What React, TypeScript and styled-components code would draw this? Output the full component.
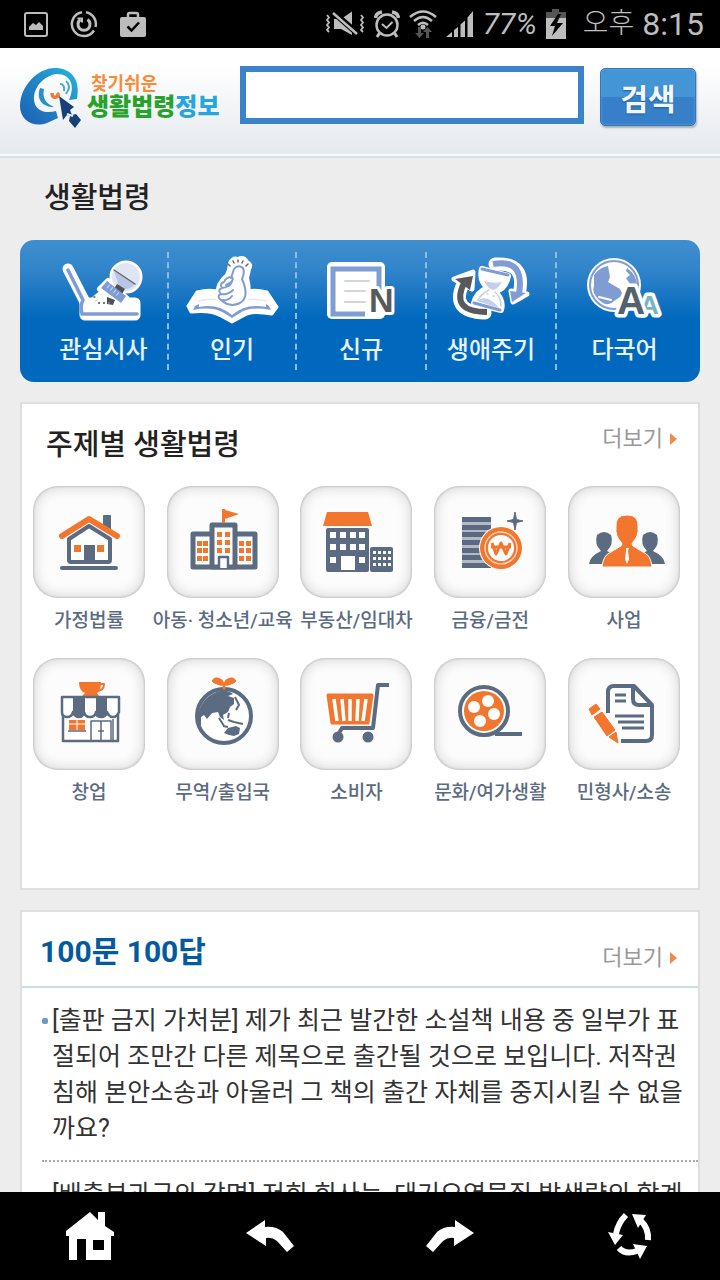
import React from 'react';
import styled, { createGlobalStyle } from 'styled-components';

const SLATE = '#5b6b82';
const ORANGE = '#f2762e';
const PERI = '#7f9dd3';

const GlobalStyle = createGlobalStyle`
  * { box-sizing: border-box; }
  body {
    margin: 0;
    background: #ededed;
    font-family: Roboto, "Noto Sans CJK KR", sans-serif;
    color: #222;
  }
  h1, h2, ul, p { margin: 0; padding: 0; }
  ul { list-style: none; }
  a { color: inherit; text-decoration: none; }
  svg { display: block; flex: none; }
`;

const Screen = styled.div`
  display: flex;
  flex-direction: column;
  height: 100vh;
`;

const StatusBar = styled.div`
  flex: none;
  display: flex;
  align-items: center;
  justify-content: space-between;
  height: 48px;
  padding: 0 16px 0 24px;
  background: #000;
  color: #bdbdbd;
`;

const StatusGroup = styled.div<{ $gap: number }>`
  display: flex;
  align-items: center;
  gap: ${p => p.$gap}px;
`;

const StatusText = styled.span<{ $slanted?: boolean }>`
  font-family: Roboto, "Noto Sans CJK KR", sans-serif;
  font-size: ${p => (p.$slanted ? 30 : 32)}px;
  line-height: 48px;
  font-weight: 400;
  font-style: ${p => (p.$slanted ? 'italic' : 'normal')};
  white-space: nowrap;
`;

const StatusClock = styled(StatusText)`
  display: flex;
  gap: 8px;
  margin-left: 8px;
`;

const Hangul = styled.span`
  font-size: 28px;
  font-weight: 300;
`;

const Page = styled.main`
  flex: 1;
  min-height: 0;
  overflow-y: auto;
  scrollbar-width: none;
`;

const Header = styled.header`
  display: flex;
  align-items: flex-start;
  height: 110px;
  padding: 18px 24px 0 20px;
  background: linear-gradient(#fff 15%, #e6eaee 95%);
  border-bottom: 2px solid #d3e1ee;
  box-shadow: inset 0 -2px #f6fafd;
`;

const Logo = styled.a`
  display: flex;
  gap: 5px;
  width: 220px;
  flex: none;
  padding-top: 2px;
`;

const LogoText = styled.span`
  display: flex;
  flex-direction: column;
  padding-top: 5px;
  font-weight: 900;
  white-space: nowrap;
`;

const LogoTop = styled.span`
  padding-left: 4px;
  font-size: 18px;
  line-height: 22px;
  font-weight: 700;
  color: #fb8a35;
`;

const LogoMain = styled.span<{ $color: string }>`
  font-size: 24px;
  line-height: 24px;
  color: ${p => p.$color};
`;

const SearchForm = styled.form`
  flex: 1;
  min-width: 0;
  display: flex;
  gap: 16px;
`;

const SearchInput = styled.input`
  flex: 1;
  min-width: 0;
  height: 58px;
  padding: 0 10px;
  border: 6px solid #3a82ca;
  border-radius: 0;
  background: #fff;
  font: inherit;
  font-size: 25px;
  outline: none;
`;

const SearchButton = styled.button`
  flex: none;
  width: 96px;
  height: 58px;
  margin-top: 2px;
  padding: 0;
  border: 1px solid #2f76bd;
  border-radius: 5px;
  background: linear-gradient(#4395d5 50%, #3780c9 50%);
  box-shadow: 1px 2px 2px #a9b1b9, inset 0 0 2px #6fb0e4;
  color: #f3f8fd;
  font-family: "Noto Sans CJK KR", sans-serif;
  font-size: 30px;
  font-weight: 700;
  line-height: 54px;
  text-shadow: 0 1px 2px #1d5c9f;
`;

const PageTitle = styled.h1`
  padding: 18px 44px 20px;
  font-size: 29px;
  line-height: 44px;
  font-weight: 500;
`;

const Stack = styled.div`
  display: flex;
  flex-direction: column;
  gap: 20px;
  padding: 0 20px 20px;
`;

const QuickNav = styled.nav`
  display: grid;
  grid-template-columns: 127fr 128fr 130fr 130fr 137fr;
  height: 142px;
  padding: 12px 8px 12px 20px;
  border-radius: 14px;
  background: linear-gradient(#3f8fcf, #3385ca 20%, #0169bd 55%);
`;

const QuickItem = styled.a`
  display: flex;
  flex-direction: column;
  align-items: center;
  gap: 6px;
  padding-top: 2px;
  color: #e9f2fb;
  font-size: 24px;
  line-height: 36px;
  font-weight: 500;
  white-space: nowrap;

  & + & {
    border-left: 2px dashed #8fbde2;
  }
`;

const Panel = styled.section<{ $minHeight?: number }>`
  min-height: ${p => p.$minHeight ?? 0}px;
  border: 2px solid #dfdfdf;
  background: #fff;
`;

const PanelHead = styled.div<{ $ruled?: boolean }>`
  display: flex;
  justify-content: space-between;
  align-items: center;
  height: ${p => (p.$ruled ? 76 : 82)}px;
  padding: ${p => (p.$ruled ? '6px 20px 0 18px' : '0 20px 0 24px')};
  border-bottom: ${p => (p.$ruled ? '2px solid #c9dcec' : 'none')};
`;

const PanelTitle = styled.h2<{ $accent?: boolean }>`
  font-size: ${p => (p.$accent ? 30 : 29)}px;
  line-height: 44px;
  font-weight: ${p => (p.$accent ? 700 : 500)};
  color: ${p => (p.$accent ? '#045a9e' : '#222')};
`;

const MoreLink = styled.a<{ $low?: boolean }>`
  display: flex;
  align-items: center;
  gap: 7px;
  padding: ${p => (p.$low ? '12px 0 0' : '0 0 12px')};
  font-size: 22px;
  line-height: 32px;
  font-weight: 400;
  color: #999;
`;

const TopicGrid = styled.ul`
  display: grid;
  grid-template-columns: repeat(5, minmax(0, 1fr));
  row-gap: 16px;
  margin-right: 7px;
`;

const TopicLink = styled.a`
  display: flex;
  flex-direction: column;
  align-items: center;
  gap: 7px;
  height: 156px;
  font-size: 19px;
  line-height: 32px;
  font-weight: 500;
  color: ${SLATE};
  white-space: nowrap;
`;

const Tile = styled.span`
  width: 112px;
  height: 112px;
  border-radius: 25px;
  background: #fcfcfc;
  box-shadow: inset 0 0 2px 1px #c4c4c4, inset 0 0 12px 3px #dcdcdc;
`;

const Question = styled.li`
  display: flex;
  margin-left: 20px;
  padding: 15px 0 13px;
  border-bottom: 2px dotted #aaa;
`;

const Bullet = styled.span`
  flex: none;
  width: 6px;
  height: 6px;
  margin: 15px 4px 0 0;
  border-radius: 2px;
  background: #6f9bc8;
`;

const QuestionText = styled.a`
  padding-right: 8px;
  font-size: 25px;
  line-height: 36px;
  color: #333;
  word-break: break-all;
`;

const Toolbar = styled.footer`
  flex: none;
  display: flex;
  height: 88px;
  background: #000;
`;

const ToolButton = styled.button`
  flex: 1;
  display: flex;
  align-items: center;
  justify-content: center;
  padding: 0;
  border: 0;
  background: none;
  color: #fff;
`;

/* ---------- status bar icons ---------- */

const PictureIcon = () => (
  <svg width="24" height="26" viewBox="0 0 24 26">
    <rect x="1" y="2" width="22" height="23" rx="2" fill="none" stroke="currentColor" strokeWidth="2" />
    <path d="M5 19v-3l4-4 3 2 3-3 4 4v4z" fill="currentColor" />
  </svg>
);

const SyncIcon = () => (
  <svg width="28" height="28" viewBox="0 0 28 28" fill="none" stroke="currentColor">
    <path d="M12 2.200A12 12 0 1 0 24 20.500M16 2.200A12 12 0 0 1 25.500 17" strokeWidth="2.500" />
    <path d="M17.500 9.500A6 6 0 1 1 10.500 9.500" strokeWidth="3" />
    <path d="M7.500 8.500h4.500v4" strokeWidth="2" />
  </svg>
);

const BagIcon = () => (
  <svg width="26" height="26" viewBox="0 0 26 26">
    <path d="M8 6V3.500Q8 2 9.500 2h7Q18 2 18 3.500V6" fill="none" stroke="currentColor" strokeWidth="2.500" />
    <rect y="6" width="26" height="20" rx="2" fill="currentColor" />
    <path d="M7.500 15.500l4 4 7.500-8" fill="none" stroke="#000" strokeWidth="2.500" />
  </svg>
);

const MuteIcon = () => (
  <svg width="40" height="26" viewBox="0 0 40 26">
    <path d="M9 8h7l11-7.500V24L16 18H9z" fill="currentColor" />
    <path d="M8 1l25 22" stroke="#000" strokeWidth="6" />
    <path d="M8 2l24 21" stroke="currentColor" strokeWidth="2.500" />
    <path d="M2 4l2 2.500-2 2.500 2 2.500-2 2.500 2 2.500-2 2.500 2 2M36 4l2 2.500-2 2.500 2 2.500-2 2.500 2 2.500-2 2.500 2 2" fill="none" stroke="currentColor" strokeWidth="1.800" />
  </svg>
);

const AlarmIcon = () => (
  <svg width="26" height="28" viewBox="0 0 26 28" fill="none" stroke="currentColor">
    <circle cx="13" cy="15" r="10.500" strokeWidth="2.500" />
    <path d="M1.500 8Q2 3 8 2M24.500 8Q24 3 18 2" strokeWidth="3.500" />
    <path d="M8 14l4.500 4 6-6" strokeWidth="2" />
    <path d="M5.500 23L3 27M20.500 23l2.500 4" strokeWidth="3" />
  </svg>
);

const WifiIcon = () => (
  <svg width="28" height="30" viewBox="0 0 28 30" fill="none">
    <g stroke="currentColor" strokeWidth="2.500">
      <path d="M1 8Q14-3 27 8M5 12q9-8 18 0M9 16q5-4.500 10 0" />
    </g>
    <circle cx="14" cy="18" r="2.500" fill="currentColor" />
    <path d="M9 18h3v6h3l-4.500 5L6 24h3zM17 29h3v-6h3l-4.500-5L14 23h3z" fill="#555" />
  </svg>
);

const SignalIcon = () => (
  <svg width="28" height="26" viewBox="0 0 28 26" fill="currentColor">
    <path d="M0 26l6-5v5zM8 19l4-3v10H8zM14.500 13.500l4.500-4V26h-4.500zM21.500 6.500L27 0v26h-5.500z" />
  </svg>
);

const BatteryIcon = () => (
  <svg width="20" height="30" viewBox="0 0 20 30">
    <path d="M6 0h7v3h7v6H0V3h6z" fill="#555" />
    <path d="M0 9h20v21H0z" fill="currentColor" />
    <path d="M12 5L4 17h5l-3 10 11-13h-6l4-9z" fill="#000" />
  </svg>
);

/* ---------- logo ---------- */

const LogoMark = () => (
  <svg width="62" height="60" viewBox="0 0 62 60">
    <defs>
      <linearGradient id="ring" x1="0" y1="1" x2="1" y2="0">
        <stop offset="0" stopColor="#1a60b4" />
        <stop offset=".5" stopColor="#2384c4" />
        <stop offset="1" stopColor="#22b8df" />
      </linearGradient>
    </defs>
    <path d="M57 31C61 10 50 0 35 0 17 0 0 19 0 38 0 52 13 60 27 55L38 50 36 43C26 46 15 43 14 32 13 19 25 7 37 6 50 6 56 17 49 32Z" fill="url(#ring)" />
    <path d="M20 20C16 31 22 39 34 39 26 35 22 31 24 21Z" fill="#2591c8" />
    <path d="M40 16q5 0 4 7M46 13q6 5 0 13" fill="none" stroke="#4aa9d2" strokeWidth="2" />
    <path d="M32 25q0 5 4 4t1-4" fill="none" stroke="#ee7d34" strokeWidth="3.500" />
    <path d="M39 28l15 11-4 3 2 5 4-1 5 6-6 8-6-7 1-5-3-1-4 5z" fill="#173f78" />
    <path d="M47 46l6 2" stroke="#e8edf2" strokeWidth="2" />
  </svg>
);

/* ---------- quick navigation icons ---------- */

const QuickSvg = ({ children }: { children: React.ReactNode }) => (
  <svg width="96" height="72" viewBox="0 0 96 72" fill="none" strokeLinejoin="round" strokeLinecap="round" aria-hidden="true">
    {children}
  </svg>
);

const IssueIcon = () => (
  <QuickSvg>
    <g stroke="#fff" fill="#fff">
      <path d="M12 15l17 33" strokeWidth="11" />
      <path d="M29 49h50v12H29z" strokeWidth="11" />
      <circle cx="70" cy="23" r="15" strokeWidth="3" />
      <path d="M52 27l19 18-7 6-20-16z" strokeWidth="6" />
      <path d="M38 44l10-8 20 14H38z" strokeWidth="4" />
    </g>
    <path d="M12 16l15 30q-3 6-1 14h55" stroke={PERI} strokeWidth="3.500" />
    <circle cx="70" cy="23" r="14" fill="#dfe5f3" />
    <path d="M58 17l21 13q-6 7-15 5z" fill="#b9c5e2" />
    <path d="M58 16l21 14" stroke="#666" strokeWidth="1.500" />
    <path d="M58 35l8 5 3-5-8-5z" fill="#4e5053" />
    <path d="M51 27l19 15-5 7-20-15z" fill={PERI} />
    <path d="M52 32l12 10" stroke="#c8d5ee" strokeWidth="4" strokeDasharray="1 3" strokeLinecap="butt" />
    <path d="M51 43l8 3-2 5-6-1z" fill="#4e5053" />
    <path d="M38 42l2 5M42 49h12" stroke="#777" strokeWidth="2" strokeDasharray="2 3" strokeLinecap="butt" />
  </QuickSvg>
);

const PopularIcon = () => (
  <QuickSvg>
    <path d="M7 58L4 52 13 38Q33 33 48 43 63 33 83 38L93 53 88 60Q66 56 59 62L48 68 37 62Q27 56 7 58Z" fill="#fff" stroke="#fff" strokeWidth="3" />
    <path d="M9 56l2-4 4-2v3Q34 49 48 61 62 49 82 53v-3l3 2 2 4Q66 52 56 59L48 64 40 59Q28 52 9 56Z" fill={PERI} />
    <path d="M15 47q20-5 33 5 14-10 34-5" stroke="#e4e9f3" strokeWidth="1.500" />
    <path d="M46 9Q49 3 54 5 60 2 63 8 68 10 65 15L63 24Q68 42 58 50 46 56 35 46 30 32 43 21L45 16Z" fill="#fff" stroke="#fff" strokeWidth="4" />
    <path d="M47 24L50 15Q54 10 59 14 61 18 58 25 66 43 56 49 46 54 37 46 32 42 37 40 33 36 38 34 35 30 40 28 42 23 48 23 51 27 42 31M38 34Q46 33 48 28M37 40Q44 41 49 36M39 46Q44 47 48 42" stroke={PERI} strokeWidth="2" />
    <path d="M46 12l-2-2M50 9l-1-2M54 8V6M58 9l1-2M62 12l2-2" stroke="#666" strokeWidth="1.500" />
  </QuickSvg>
);

const NewIcon = () => (
  <QuickSvg>
    <rect x="14" y="8" width="58" height="57" rx="5" fill="#fff" />
    <path d="M66 36V15H20v45h32" stroke={PERI} strokeWidth="5" strokeLinejoin="miter" strokeLinecap="butt" />
    <path d="M32 27h24M32 37h20M32 48h20" stroke="#d5d5d5" strokeWidth="2" />
    <text x="56" y="58" fill="#58595b" stroke="#fff" strokeWidth="6" paintOrder="stroke" fontFamily="Liberation Sans, sans-serif" fontWeight="700" fontSize="34">N</text>
  </QuickSvg>
);

const LifeIcon = () => (
  <QuickSvg>
    <path d="M20 30Q7 58 42 59M52 10Q84 8 76 40" stroke="#fff" strokeWidth="13" />
    <path d="M11 25l19-7-1 17zM68 37l16 3-14 8z" fill="#fff" stroke="#fff" strokeWidth="5" />
    <path d="M39 15l26 7Q62 36 51 37 61 46 58 56L31 49Q34 38 45 34 36 26 39 15Z" fill="#fff" stroke="#fff" strokeWidth="6" />
    <path d="M21 29Q7 58 44 58" stroke="#58595b" strokeWidth="6" strokeLinecap="butt" />
    <path d="M12 25l18-3-3 14z" fill="#58595b" />
    <path d="M50 10Q82 4 76 40" stroke={PERI} strokeWidth="6" strokeLinecap="butt" />
    <path d="M67 37l16 2-14 9z" fill={PERI} />
    <path d="M39 15l26 6M31 49l26 7" stroke={PERI} strokeWidth="3" />
    <path d="M41 27q10 3 18 1-5 8-9 8-6-2-9-9z" fill="#c4cfe8" />
    <path d="M34 47q10-8 22 7z" fill="#c4cfe8" />
    <path d="M46 36q-8 4-11 10M52 38q6 5 6 14M44 40h1M50 42h1" stroke="#c4cfe8" strokeWidth="1.500" />
  </QuickSvg>
);

const LanguageIcon = () => (
  <QuickSvg>
    <circle cx="37" cy="31" r="27" fill="#fff" />
    <circle cx="37" cy="31" r="24" fill="#fff" stroke={PERI} strokeWidth="2" />
    <path d="M17 21Q23 13 31 12L33 23 31 28 36 31 43 35 46 41 37 47Q31 54 22 46 14 38 17 32Z" fill={PERI} />
    <path d="M50 14Q60 21 60 32L53 30 49 24 53 21 49 17Z" fill={PERI} />
    <path d="M22 43l12 3" stroke="#fff" strokeWidth="2" />
    <text x="63" y="60" fill="#78b3c3" stroke="#fff" strokeWidth="7" paintOrder="stroke" fontFamily="Liberation Sans, sans-serif" fontWeight="700" fontSize="26">A</text>
    <text x="40" y="60" fill="#55616d" stroke="#fff" strokeWidth="7" paintOrder="stroke" fontFamily="Liberation Sans, sans-serif" fontWeight="700" fontSize="39">A</text>
  </QuickSvg>
);

/* ---------- topic icons ---------- */

const TopicSvg = ({ children }: { children: React.ReactNode }) => (
  <svg width="112" height="112" viewBox="0 0 112 112" fill="none" strokeLinejoin="round" aria-hidden="true">
    {children}
  </svg>
);

const cells = (xs: number[], ys: number[], size: number, fill: string) =>
  ys.flatMap(y => xs.map(x => <rect key={`${x}-${y}`} x={x} y={y} width={size} height={size} fill={fill} />));

const HomeTopic = () => (
  <TopicSvg>
    <rect x="70" y="29" width="8" height="16" rx="1" fill={SLATE} />
    <path d="M36 53l20-13 21 13v21q0 2-2 2H38q-2 0-2-2z" fill="#fff" stroke={SLATE} strokeWidth="4" />
    <path d="M29 50l27-17 28 17" stroke={ORANGE} strokeWidth="6" strokeLinecap="round" />
    <path d="M41 59h7v7h-7zM64 59h7v7h-7z" fill={ORANGE} />
    <path d="M51 59h11v18H51z" fill={SLATE} />
    <path d="M29 82h54" stroke={SLATE} strokeWidth="4" strokeLinecap="round" />
  </TopicSvg>
);

const SchoolTopic = () => (
  <TopicSvg>
    <path d="M26 48h62v33H26z" fill="#fff" stroke={SLATE} strokeWidth="5" />
    <path d="M45 39h23v42H45z" fill="#fff" stroke={SLATE} strokeWidth="5" />
    <path d="M55 23h3v14h-3z" fill={ORANGE} />
    <path d="M58 24l14 4-14 5z" fill={ORANGE} />
    {cells([50, 58], [46, 54, 62], 5, ORANGE)}
    {cells([30, 36], [55, 62, 70], 5, ORANGE)}
    {cells([72, 79], [55, 62, 70], 5, ORANGE)}
    <path d="M52 82V71h9v11" fill="#fff" stroke={SLATE} strokeWidth="2.500" />
  </TopicSvg>
);

const EstateTopic = () => (
  <TopicSvg>
    <path d="M27 26h41l4 14H23z" fill={ORANGE} />
    <rect x="26" y="42" width="43" height="44" rx="2" fill={SLATE} />
    <rect x="70" y="61" width="23" height="25" rx="2" fill={SLATE} />
    {cells([30, 40, 50, 59], [46, 58], 6, '#fff')}
    {cells([30, 59], [71], 6, '#fff')}
    <path d="M41 70h14v14H41z" fill="#fff" />
    {cells([73, 78, 83, 88], [65, 71, 77], 3, '#fff')}
  </TopicSvg>
);

const MoneyTopic = () => (
  <TopicSvg>
    {[31, 39, 46, 54, 62, 69, 77].map(y => (
      <rect key={y} x="28" y={y} width="29" height="5" fill={SLATE} />
    ))}
    <path d="M28 31h29v51H28z" fill={SLATE} opacity=".45" />
    <circle cx="67" cy="62" r="22" fill="#fff" />
    <circle cx="67" cy="62" r="21" fill={ORANGE} />
    <circle cx="67" cy="62" r="16" stroke="#fbd3bb" strokeWidth="1.500" />
    <circle cx="67" cy="62" r="13" fill="#fff" />
    <path d="M58 57l4 11 5-11 5 11 4-11M57 61h20" stroke={ORANGE} strokeWidth="3" />
    <path d="M81 26l1.500 7.500L89 35l-6.500 1.500L81 44l-1.500-7.500L73 35l6.500-1.500z" fill={SLATE} stroke={SLATE} />
  </TopicSvg>
);

const BusinessTopic = () => (
  <TopicSvg>
    <path d="M21 78q1-8 12-13-7-7-4-16 7-6 14 0 3 9-4 16l8 4v9zM97 78q-1-8-12-13 7-7 4-16-7-6-14 0-3 9 4 16l-8 4v9z" fill={SLATE} />
    <path d="M34 81q1-12 9-15l10-6q2-2 0-4-6-6-5-15-1-12 11-12t11 12q1 9-5 15-2 2 0 4l10 6q8 3 9 15z" fill={ORANGE} stroke="#fbfbfb" strokeWidth="1" />
    <path d="M58 62h3l-1 3 1 8-2 5-2-5 1-8z" fill="#fff" />
  </TopicSvg>
);

const ShopTopic = () => (
  <TopicSvg>
    <path d="M46 24h22q0 9-4 11l2 3H49l3-3q-6-2-6-11z" fill={ORANGE} />
    <path d="M67 26h4q0 7-8 7" stroke={ORANGE} strokeWidth="2" />
    <path d="M30 56h55v27H30z" fill="#fff" stroke={SLATE} strokeWidth="2.500" />
    <path d="M29 39h57v15q-2 5-6 5t-6-5q-1 5-6 5t-5-5q-1 5-6 5t-6-5q-1 5-5 5t-6-5q-1 5-6 5t-5-5z" fill="#fff" stroke={SLATE} strokeWidth="2.500" />
    <path d="M40 39h12v15q-2 5-6 5t-6-5zM63 39h11v15q-1 5-6 5t-5-5z" fill={SLATE} />
    <path d="M36 62h16v10H36z" fill={ORANGE} />
    <path d="M44 62v10M36 66h16" stroke="#fff" />
    <path d="M35 73h18" stroke={SLATE} strokeWidth="1.500" />
    <path d="M58 83V63h20v20M68 63v20M80 61v22" stroke={SLATE} strokeWidth="1.500" />
    <path d="M65 73h6" stroke={SLATE} strokeWidth="1.500" />
  </TopicSvg>
);

const TradeTopic = () => (
  <TopicSvg>
    <circle cx="57" cy="58" r="27" fill="#fff" stroke={SLATE} strokeWidth="4" />
    <path d="M56 31q0-4 1-4-3 1-7-1-4-1-5-3 2-4 6-3 5 1 6 6 1-5 6-6 4-1 6 3-1 2-5 3-4 2-7 1 1 0 1 4z" fill={ORANGE} stroke={ORANGE} strokeWidth="1" />
    <path d="M32 53q5-16 21-20 8-1 13 3l-5 2 6 2 0 6-4 3-2 5-5 3 1 5-4-3-2-5-6 1-5 6-3-4-3 2 0 9-3-6z" fill={SLATE} />
    <path d="M68 39l4 8-3 5M52 60l5 8M62 55l-1 5M61 62l6 2 9 2M56 68l5 1" stroke={SLATE} strokeWidth="2" />
    <path d="M57 75l4-5 8-2 4 2-1 6-5 2-5-1z" fill={SLATE} />
  </TopicSvg>
);

const CartTopic = () => (
  <TopicSvg>
    <path d="M28 37h44l-4 28H32z" fill={ORANGE} stroke={ORANGE} strokeWidth="3" />
    <path d="M34 41l3 22M42 41l2 22M50 41v22M58 41l-1 22M66 41l-3 22" stroke="#fff" strokeWidth="3.500" />
    <path d="M89 27H78l-5 43H42l-3 5" stroke={SLATE} strokeWidth="4" />
    <circle cx="38" cy="79" r="5.500" fill={SLATE} />
    <circle cx="68" cy="79" r="5.500" fill={SLATE} />
  </TopicSvg>
);

const CultureTopic = () => (
  <TopicSvg>
    <circle cx="50" cy="53" r="24" fill="#fff" stroke={SLATE} strokeWidth="4" />
    <circle cx="50" cy="53" r="20" fill={ORANGE} />
    {[[54, 43], [40, 49], [60, 56], [46, 63]].map(([x, y]) => (
      <circle key={x} cx={x} cy={y} r="6" fill="#fff" />
    ))}
    <path d="M61 76h27" stroke={SLATE} strokeWidth="4" />
  </TopicSvg>
);

const LawsuitTopic = () => (
  <TopicSvg>
    <path d="M40 55V34q0-6 6-6h20l18 19v30q0 6-6 6H53" fill="#fdfdfd" stroke={SLATE} strokeWidth="4" />
    <path d="M65 29v12q0 6 6 6h12" stroke={SLATE} strokeWidth="4" />
    <path d="M47 37h11M47 43h11M47 58h29M50 64h26M54 70h22" stroke={SLATE} strokeWidth="3" />
    <path d="M21 51l7-5 4 5-8 6zM26 59l8-5 13 18-8 6zM41 79l7-5 2 11z" fill={ORANGE} stroke={ORANGE} strokeWidth="1" />
  </TopicSvg>
);

/* ---------- toolbar icons ---------- */

const HomeTool = () => (
  <svg width="48" height="48" viewBox="0 0 48 48" fill="currentColor" aria-hidden="true">
    <path fillRule="evenodd" d="M24 0l8 8V0h7v14l9 6v4h-3v24H20V27h-9v21H3V24H0v-5zM27 28v10h11V28z" />
  </svg>
);

const BackTool = () => (
  <svg width="48" height="48" viewBox="0 0 48 48" fill="currentColor" aria-hidden="true">
    <path d="M0 21L19 8v7q11-1 18 5l11 14-7 6-10-11q-5-4-11-3v8z" />
  </svg>
);

const ForwardTool = () => (
  <svg width="48" height="48" viewBox="0 0 48 48" fill="currentColor" aria-hidden="true">
    <path d="M48 21L29 8v7q-11-1-18 5L0 34l7 6 10-11q5-4 11-3v8z" />
  </svg>
);

const ReloadTool = () => (
  <svg width="48" height="48" viewBox="0 0 48 48" fill="none" aria-hidden="true">
    <path d="M20 3Q12 11 10 22M34 8q9 8 8 20M13 36q6 7 18 3" stroke="currentColor" strokeWidth="6" />
    <path d="M2 20l15 3-8 10zM26 2l14 1-8 13zM27 32l14 2-7 13z" fill="currentColor" />
  </svg>
);

const quickItems = [
  { label: '관심시사', Icon: IssueIcon },
  { label: '인기', Icon: PopularIcon },
  { label: '신규', Icon: NewIcon },
  { label: '생애주기', Icon: LifeIcon },
  { label: '다국어', Icon: LanguageIcon },
];

const topics = [
  { label: '가정법률', Icon: HomeTopic },
  { label: '아동· 청소년/교육', Icon: SchoolTopic },
  { label: '부동산/임대차', Icon: EstateTopic },
  { label: '금융/금전', Icon: MoneyTopic },
  { label: '사업', Icon: BusinessTopic },
  { label: '창업', Icon: ShopTopic },
  { label: '무역/출입국', Icon: TradeTopic },
  { label: '소비자', Icon: CartTopic },
  { label: '문화/여가생활', Icon: CultureTopic },
  { label: '민형사/소송', Icon: LawsuitTopic },
];

const questions = [
  '[출판 금지 가처분] 제가 최근 발간한 소설책 내용 중 일부가 표절되어 조만간 다른 제목으로 출간될 것으로 보입니다. 저작권 침해 본안소송과 아울러 그 책의 출간 자체를 중지시킬 수 없을까요?',
  '[배출부과금의 감면] 저희 회사는, 대기오염물질 발생량의 합계',
];

const tools = [
  { label: '홈', Icon: HomeTool },
  { label: '뒤로', Icon: BackTool },
  { label: '앞으로', Icon: ForwardTool },
  { label: '새로고침', Icon: ReloadTool },
];

const More = ({ low }: { low?: boolean }) => (
  <MoreLink href="#more" $low={low}>
    더보기
    <svg width="8" height="12" viewBox="0 0 8 12" aria-hidden="true">
      <path d="M0 0l7 6-7 6z" fill="#ee8a4c" />
    </svg>
  </MoreLink>
);

export default function App() {
  return (
    <Screen>
      <GlobalStyle />
      <StatusBar>
        <StatusGroup $gap={22}>
          <PictureIcon />
          <SyncIcon />
          <BagIcon />
        </StatusGroup>
        <StatusGroup $gap={9}>
          <MuteIcon />
          <AlarmIcon />
          <WifiIcon />
          <SignalIcon />
          <StatusText $slanted>77%</StatusText>
          <BatteryIcon />
          <StatusClock>
            <Hangul>오후</Hangul>
            <span>8:15</span>
          </StatusClock>
        </StatusGroup>
      </StatusBar>

      <Page>
        <Header>
          <Logo href="#home">
            <LogoMark />
            <LogoText>
              <LogoTop>찾기쉬운</LogoTop>
              <span>
                <LogoMain $color="#27a22b">생활법령</LogoMain>
                <LogoMain $color="#27a5df">정보</LogoMain>
              </span>
            </LogoText>
          </Logo>
          <SearchForm onSubmit={e => e.preventDefault()}>
            <SearchInput type="text" aria-label="검색어" />
            <SearchButton type="submit">검색</SearchButton>
          </SearchForm>
        </Header>

        <PageTitle>생활법령</PageTitle>

        <Stack>
          <QuickNav>
            {quickItems.map(({ label, Icon }) => (
              <QuickItem key={label} href="#quick">
                <Icon />
                {label}
              </QuickItem>
            ))}
          </QuickNav>

          <Panel $minHeight={488}>
            <PanelHead>
              <PanelTitle>주제별 생활법령</PanelTitle>
              <More />
            </PanelHead>
            <TopicGrid>
              {topics.map(({ label, Icon }) => (
                <li key={label}>
                  <TopicLink href="#topic">
                    <Tile>
                      <Icon />
                    </Tile>
                    {label}
                  </TopicLink>
                </li>
              ))}
            </TopicGrid>
          </Panel>

          <Panel>
            <PanelHead $ruled>
              <PanelTitle $accent>100문 100답</PanelTitle>
              <More low />
            </PanelHead>
            <ul>
              {questions.map(text => (
                <Question key={text}>
                  <Bullet />
                  <QuestionText href="#question">{text}</QuestionText>
                </Question>
              ))}
            </ul>
          </Panel>
        </Stack>
      </Page>

      <Toolbar>
        {tools.map(({ label, Icon }) => (
          <ToolButton key={label} type="button" aria-label={label}>
            <Icon />
          </ToolButton>
        ))}
      </Toolbar>
    </Screen>
  );
}
